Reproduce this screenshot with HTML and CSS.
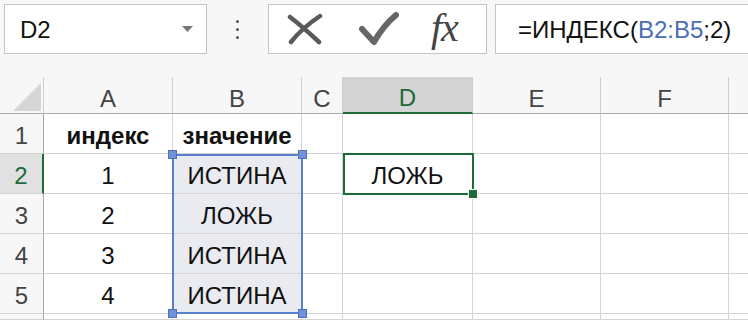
FILE: index.html
```html
<!DOCTYPE html>
<html lang="ru">
<head>
    <meta charset="UTF-8">
    <title>ИНДЕКС</title>
    <link rel="stylesheet" href="styles.css">
</head>
<body>

<div class="formula-bar">
    <div class="name-box">
        <span>D2</span>
        <svg class="arrow" width="11" height="6" viewBox="0 0 11 6"><path d="M0 0 L11 0 L5.5 6 Z" fill="#777"/></svg>
    </div>
    <div class="dots"><span></span><span></span><span></span></div>
    <div class="fx-box">
        <svg width="36" height="32" viewBox="0 0 36 32">
            <path d="M3 4 Q 16 14 32 29" stroke="#5a5a5a" stroke-width="4.5" fill="none" stroke-linecap="round"/>
            <path d="M33 3 Q 15 15 4 29" stroke="#5a5a5a" stroke-width="4.5" fill="none" stroke-linecap="round"/>
        </svg>
        <svg width="40" height="34" viewBox="0 0 40 34">
            <path d="M3 17 L15 30 Q 24 14 37 3" stroke="#666" stroke-width="6" fill="none" stroke-linecap="round" stroke-linejoin="round"/>
        </svg>
        <span class="fx">fx</span>
    </div>
    <div class="formula-input">=ИНДЕКС(<span class="ref">B2:B5</span>;2)</div>
</div>

<div class="sheet">
    <div class="cell head corner"><svg width="28" height="28" viewBox="0 0 28 28"><path d="M0 28 L28 28 L28 0 Z" fill="#d6d6d6"/></svg></div>
    <div class="cell head">A</div>
    <div class="cell head">B</div>
    <div class="cell head">C</div>
    <div class="cell head active-col">D</div>
    <div class="cell head">E</div>
    <div class="cell head">F</div>
    <div class="cell head last"></div>

    <div class="cell row-head">1</div>
    <div class="cell bold">индекс</div>
    <div class="cell bold">значение</div>
    <div class="cell"></div>
    <div class="cell"></div>
    <div class="cell"></div>
    <div class="cell"></div>
    <div class="cell last"></div>

    <div class="cell row-head active-row">2</div>
    <div class="cell">1</div>
    <div class="cell in-range">ИСТИНА</div>
    <div class="cell"></div>
    <div class="cell">ЛОЖЬ</div>
    <div class="cell"></div>
    <div class="cell"></div>
    <div class="cell last"></div>

    <div class="cell row-head">3</div>
    <div class="cell">2</div>
    <div class="cell in-range">ЛОЖЬ</div>
    <div class="cell"></div>
    <div class="cell"></div>
    <div class="cell"></div>
    <div class="cell"></div>
    <div class="cell last"></div>

    <div class="cell row-head">4</div>
    <div class="cell">3</div>
    <div class="cell in-range">ИСТИНА</div>
    <div class="cell"></div>
    <div class="cell"></div>
    <div class="cell"></div>
    <div class="cell"></div>
    <div class="cell last"></div>

    <div class="cell row-head">5</div>
    <div class="cell">4</div>
    <div class="cell in-range">ИСТИНА</div>
    <div class="cell"></div>
    <div class="cell"></div>
    <div class="cell"></div>
    <div class="cell"></div>
    <div class="cell last"></div>

    <div class="cell row-head"></div>
    <div class="cell"></div>
    <div class="cell"></div>
    <div class="cell"></div>
    <div class="cell"></div>
    <div class="cell"></div>
    <div class="cell"></div>
    <div class="cell last"></div>

    <!-- range being referenced in the formula -->
    <div class="range-box">
        <span class="handle tl"></span>
        <span class="handle tr"></span>
        <span class="handle bl"></span>
        <span class="handle br"></span>
    </div>

    <!-- active cell D2 -->
    <div class="active-cell"><span class="fill-handle"></span></div>
</div>

</body>
</html>
```

FILE: styles.css
```css
* {
    margin: 0;
    padding: 0;
    box-sizing: border-box;
}

body {
    width: 748px;
    height: 320px;
    overflow: hidden;
    background-color: #f7f7f7;
    font-family: "Liberation Sans", Arial, sans-serif;
    color: #111;
}

.formula-bar {
    display: flex;
    height: 77px;
    padding: 4px 0 0 4px;
    background-color: #f7f7f7;
}

.name-box,
.fx-box,
.formula-input {
    height: 50px;
    background-color: #fff;
    border: 1px solid #c4c4c4;
    display: flex;
    align-items: center;
}

.name-box {
    width: 203px;
    padding: 2px 13px 0 15px;
    justify-content: space-between;
    font-size: 24px;
}

.name-box .arrow {
    margin-top: -2px;
}

.dots {
    width: 61px;
    height: 50px;
    display: flex;
    flex-direction: column;
    align-items: center;
    justify-content: center;
    gap: 5px;
}

.dots span {
    width: 3px;
    height: 3px;
    border-radius: 50%;
    background-color: #555;
}

.fx-box {
    width: 219px;
    padding-left: 18px;
}

.fx-box svg:first-child {
    margin-right: 36px;
}

.fx-box svg:nth-child(2) {
    margin-right: 32px;
}

.fx {
    font-family: "Liberation Serif", "Times New Roman", serif;
    font-style: italic;
    font-size: 40px;
    color: #444;
    margin-top: -4px;
    letter-spacing: -1px;
}

.formula-input {
    flex: 1;
    margin-left: 8px;
    margin-right: -4px;
    padding: 2px 0 0 22px;
    font-size: 24px;
    white-space: nowrap;
}

.ref {
    color: #4a6db8;
}

/* grid */

.sheet {
    position: relative;
    display: grid;
    grid-template-columns: 44px 129px 129px 41px 130px 128px 128px 1fr;
    grid-template-rows: 37px repeat(5, 40px) 6px;
    background-color: #fff;
}

.cell {
    display: flex;
    align-items: center;
    justify-content: center;
    padding-top: 5px;
    font-size: 24px;
    border-right: 1px solid #d4d4d4;
    border-bottom: 1px solid #d4d4d4;
    white-space: nowrap;
    overflow: hidden;
}

.cell.last {
    border-right: none;
}

.head {
    padding-top: 7px;
    background-color: #f7f7f7;
    color: #444;
    border-right-color: #cfcfcf;
    border-bottom-color: #a9a9a9;
}

.corner {
    align-items: flex-end;
    justify-content: flex-end;
    padding: 0 2px 2px 0;
}

.active-col {
    background-color: #d4d4d4;
    color: #1e6b3a;
    border-bottom: 2px solid #1e6b3a;
}

.row-head {
    background-color: #f7f7f7;
    color: #444;
    border-right-color: #a9a9a9;
}

.active-row {
    background-color: #e1e1e1;
    color: #1e6b3a;
    border-right: 2px solid #1e6b3a;
}

.bold {
    font-weight: bold;
}

.in-range {
    background-color: #e9ebf1;
}

.range-box {
    position: absolute;
    left: 172px;
    top: 77px;
    width: 131px;
    height: 160px;
    border: 2px solid #5b7fcf;
}

.handle {
    position: absolute;
    width: 9px;
    height: 9px;
    background-color: #6f92d8;
    border: 1px solid #4f72bd;
}

.handle.tl { left: -6px; top: -6px; }
.handle.tr { right: -6px; top: -6px; }
.handle.bl { left: -6px; bottom: -6px; }
.handle.br { right: -6px; bottom: -6px; }

.active-cell {
    position: absolute;
    left: 343px;
    top: 76px;
    width: 131px;
    height: 42px;
    border: 2px solid #1e6b3a;
}

.fill-handle {
    position: absolute;
    right: -6px;
    bottom: -6px;
    width: 10px;
    height: 10px;
    background-color: #1e6b3a;
    border: 1px solid #fff;
}
```
